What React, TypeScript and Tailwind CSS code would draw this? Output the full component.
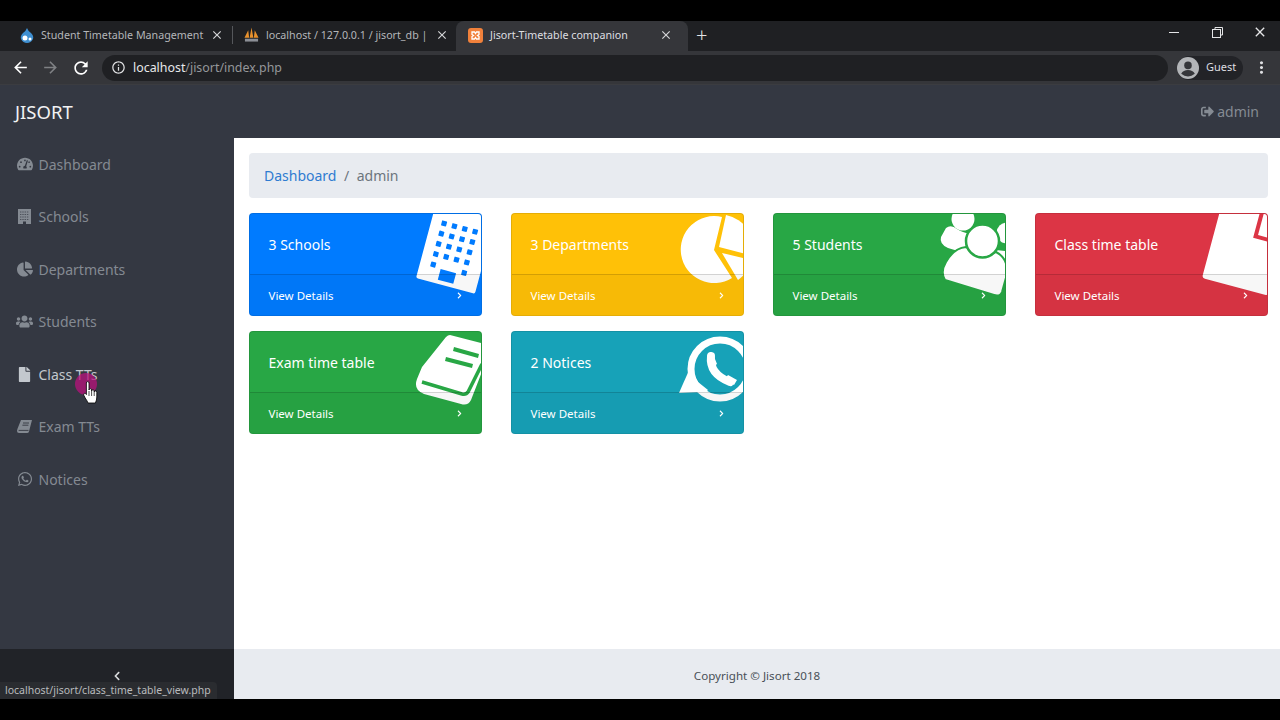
import type { ReactNode } from "react";
import {
  FaChartPie,
  FaChevronLeft,
  FaChevronRight,
  FaFile,
  FaSignOutAlt,
  FaTachometerAlt,
  FaUsers,
  FaWhatsapp,
} from "react-icons/fa";
import {
  MdArrowBack,
  MdArrowForward,
  MdClose,
  MdInfoOutline,
  MdMoreVert,
  MdRefresh,
} from "react-icons/md";

const font = "font-['Noto_Sans','Open_Sans',sans-serif]";

const BuildingArt = ({ color }: { color: string }) => {
  const rows = [-60, -49.4, -38.8, -28.2];
  const cols = [13, 23.7, 34.4, 45.1];
  return (
    <g transform="translate(166 64) rotate(15)">
      <rect x="0" y="-85" width="61" height="85" rx="2" fill="#fff" />
      {rows.map((y) =>
        cols.map((x) => (
          <rect key={`${x}${y}`} x={x - 2.6} y={y - 2.6} width="5.2" height="5.2" rx="0.6" fill={color} />
        ))
      )}
      <rect x="10.6" y="-20" width="5.2" height="5.2" rx="0.6" fill={color} />
      <rect x="42.6" y="-20" width="5.2" height="5.2" rx="0.6" fill={color} />
      <rect x="21.5" y="-15" width="16" height="11" fill={color} />
    </g>
  );
};

const PieArt = () => (
  <g fill="#fff">
    <path d="M202 36 L210 3 A33.5 33.5 0 1 0 220 64 Z" />
    <path d="M207 33 L214 1 A36 36 0 0 1 242 42 Z" />
    <path d="M210 39 L240 46 A36 36 0 0 1 226 66 Z" />
  </g>
);

const UsersArt = ({ color }: { color: string }) => (
  <g fill="#fff">
    <circle cx="189" cy="5" r="11.5" />
    <circle cx="233" cy="19" r="10.5" />
    <path d="M172 14 Q177 10 183 15 Q190 20 198 19 L194 36 Q184 38 174 34 Q165 30 167 23 Z" />
    <path d="M222 36 L240 38 L240 70 L226 52 Z" />
    <path
      d="M171 66 Q166 58 172 48 Q180 34 192 33 Q208 44 222 38 Q234 44 233 60 L228 78 Q226 83 220 81 Z"
      stroke={color}
      strokeWidth="2"
    />
    <circle cx="208.5" cy="27" r="16.5" stroke={color} strokeWidth="2.5" />
  </g>
);

const FileArt = () => (
  <g transform="translate(166 64) rotate(15)">
    <path d="M3 0 H65 Q68 0 68 -3 V-52 H39 V-85 H3 Q0 -85 0 -82 V-3 Q0 0 3 0 Z" fill="#fff" />
    <path d="M43 -85 L72 -56 H43 Z" fill="#fff" />
  </g>
);

const BookArt = ({ color }: { color: string }) => (
  <g>
    <path
      d="M200 3 Q198 3 196 5 L172 35 L167 47 Q163 58 174 62 L211 72 Q218 74 221 68 L242 14 Z"
      fill="#fff"
    />
    <path d="M204 15 L229 22 L228 26 L203 19 Z" fill={color} />
    <path d="M196 25 L223 32 L222 36 L195 29 Z" fill={color} />
    <path d="M172 50 L212 62 Q216 63 218 60 L232 32" fill="none" stroke={color} strokeWidth="3.5" />
  </g>
);

const ChatArt = () => (
  <g>
    <circle cx="208" cy="37" r="29" fill="none" stroke="#fff" strokeWidth="7" />
    <path d="M167 61 L178 36 L192 60 Z" fill="#fff" />
    <path d="M192 62 L186 50 L196 58 Z" fill="#fff" />
    <path d="M199 24 Q197 42 218 50" fill="none" stroke="#fff" strokeWidth="8" strokeLinecap="round" />
    <path d="M196 24 L201 22 L205 32 L201 35 Z" fill="#fff" />
    <path d="M212 48 L216 43 L225 48 L222 53 Z" fill="#fff" />
  </g>
);

// small sidebar glyphs that the icon font of this icon set draws differently
const SchoolGlyph = () => (
  <svg width="13" height="15" viewBox="0 0 13 15">
    <path d="M0 0H13V15H8V12.5H5V15H0Z" fill="currentColor" />
    <path d="M2 3H11M2 5.5H11M2 8H11M2 10.5H11" stroke="#343842" strokeWidth="0.7" strokeDasharray="1.4 0.9" />
  </svg>
);

const BookGlyph = () => (
  <svg width="15" height="14" viewBox="0 0 15 14">
    <path d="M4 0H15L12 11.5Q11.6 13 10 13H2Q0 13 0 11Q0 10 0.6 8.5Z" fill="currentColor" />
    <path d="M1.6 10.4H11.5M6 3H12M5.4 5.2H11.4" stroke="#343842" strokeWidth="0.9" />
  </svg>
);

const HandCursor = () => (
  <svg className="absolute top-[243px] left-[83px]" width="15" height="23" viewBox="0 0 15 23">
    <path
      d="M3.4 2 Q3.4 0.6 4.7 0.6 Q6 0.6 6 2 V9 Q6 7.6 7.3 7.6 Q8.5 7.6 8.6 9 V10 Q8.7 8.7 9.9 8.7 Q11.1 8.7 11.2 10 V11 Q11.3 9.9 12.4 9.9 Q13.8 9.9 13.8 11.5 V16 Q13.8 19 12.4 22 H5 Q4 19.5 2.2 17 L0.8 14.2 Q0.3 12.8 1.4 12.3 Q2.4 12 3.4 13.6 Z"
      fill="#fff"
      stroke="#000"
      strokeWidth="0.8"
    />
    <path d="M6 10V15M8.6 10V15M11.2 11V15" stroke="#000" strokeWidth="0.7" />
  </svg>
);

type StatCardProps = {
  title: string;
  bg: string;
  art: ReactNode;
};

const StatCard = ({ title, bg, art }: StatCardProps) => (
  <div className={`relative h-[103px] overflow-hidden rounded-[4px] border border-black/10 text-white ${bg}`}>
    <svg className="absolute top-0 left-0 h-[103px] w-[233px]" viewBox="0 0 233 103">
      {art}
    </svg>
    <div className="relative flex h-[60px] items-center pl-[18.5px] text-[14px]">{title}</div>
    <div className="relative flex h-[42px] items-center justify-between border-t border-black/15 bg-black/3 pr-[18px] pl-[18.5px] text-[11.5px]">
      <span>View Details</span>
      <FaChevronRight className="text-[7px]" />
    </div>
  </div>
);

const navItems = [
  { label: "Dashboard", icon: <FaTachometerAlt /> },
  { label: "Schools", icon: <SchoolGlyph /> },
  { label: "Departments", icon: <FaChartPie /> },
  { label: "Students", icon: <FaUsers className="text-[17px]" /> },
  { label: "Class TTs", icon: <FaFile className="text-[15px]" />, active: true },
  { label: "Exam TTs", icon: <BookGlyph /> },
  { label: "Notices", icon: <FaWhatsapp className="text-[16px]" /> },
];

type TabProps = {
  title: string;
  icon: ReactNode;
  className: string;
};

const Tab = ({ title, icon, className }: TabProps) => (
  <div className={`flex h-full items-center pb-[2px] ${className}`}>
    <span className="flex w-[15px] shrink-0 justify-center">{icon}</span>
    <span className="ml-[7px] flex-1 text-[10.7px] whitespace-nowrap">{title}</span>
    <MdClose className="ml-[3px] shrink-0 text-[14px] text-[#d5d6d8]" />
  </div>
);

const App = () => {
  return (
    <div className={`flex h-[720px] w-[1280px] flex-col overflow-hidden bg-black ${font}`}>
      <div className="h-[21px] shrink-0" />

      <div className="flex h-[30px] shrink-0 items-center bg-[#1f2023] pl-[5px]">
        <Tab
          title="Student Timetable Management"
          className="w-[227px] pr-[8px] pl-[14px] text-[#b4b6b9]"
          icon={
            <svg width="14" height="15" viewBox="0 0 14 15">
              <path d="M7 0 Q8 3 11 5 Q14 8 13 11 Q11 15 7 15 Q3 15 1 11 Q0 8 3 5 Q6 3 7 0Z" fill="#3f8fd0" />
              <circle cx="5" cy="10" r="2.5" fill="#fff" />
              <circle cx="10" cy="11" r="1.5" fill="#fff" />
            </svg>
          }
        />
        <div className="mb-[2px] h-[18px] w-px bg-[#55575b]" />
        <Tab
          title="localhost / 127.0.0.1 / jisort_db |"
          className="w-[223px] pr-[7px] pl-[11px] text-[#b4b6b9]"
          icon={
            <svg width="16" height="16" viewBox="0 0 16 16">
              <path d="M0.5 11 L4.5 3 L5.5 11 Z M6 11 L8 0 L10 11 Z M10.5 11 L11.5 3 L15.5 11 Z" fill="#e8912d" />
              <rect x="1" y="12" width="14" height="3" fill="#8c8f96" />
            </svg>
          }
        />
        <Tab
          title="Jisort-Timetable companion"
          className="w-[232px] rounded-t-[8px] bg-[#35363a] pr-[15px] pl-[12px] text-[#dedfe1]"
          icon={
            <svg width="15" height="15" viewBox="0 0 15 15">
              <rect width="15" height="15" rx="3" fill="#f1813b" />
              <path d="M4 4 H6.5 L7.5 5.5 L8.5 4 H11 V6.5 L9.5 7.5 L11 8.5 V11 H8.5 L7.5 9.5 L6.5 11 H4 V8.5 L5.5 7.5 L4 6.5 Z" fill="none" stroke="#fff" strokeWidth="1.3" />
            </svg>
          }
        />
        <span className="mb-[2px] ml-[8px] text-[20px] leading-none font-light text-[#e3e4e6]">+</span>
        <div className="mb-[8px] ml-auto flex items-center gap-[29.5px] pr-[12px] text-[#e4e5e7]">
          <div className="mr-[3px] h-px w-[10px] bg-[#e4e5e7]" />
          <svg width="11" height="11" viewBox="0 0 11 11" fill="none" stroke="#e4e5e7">
            <rect x="0.5" y="2.5" width="8" height="8" />
            <path d="M3 2.5 V0.5 H10.5 V8 H8.5" />
          </svg>
          <MdClose className="text-[16px]" />
        </div>
      </div>

      <div className="flex h-[34px] shrink-0 items-center border-b border-[#3b3c40] bg-[#35363a] pl-[11px] text-white">
        <MdArrowBack className="text-[19px]" />
        <MdArrowForward className="ml-[11px] text-[19px] text-[#7f8184]" />
        <MdRefresh className="ml-[11px] text-[20px]" />
        <div className="ml-[11px] flex h-[26px] w-[1066px] items-center rounded-full bg-[#1f2023] pl-[9px] text-[12.4px]">
          <MdInfoOutline className="text-[15px] text-[#e0e1e3]" />
          <span className="ml-[7px] pt-[2px] text-[#e8e9eb]">localhost</span>
          <span className="pt-[2px] text-[#95979a]">/jisort/index.php</span>
        </div>
        <div className="ml-[9px] flex h-[24px] w-[66px] items-center gap-[7px] rounded-full bg-[#222327] text-[11px] text-[#dddee0]">
          <svg width="22" height="22" viewBox="0 0 21 21">
            <circle cx="10.5" cy="10.5" r="10.5" fill="#b3b5b8" />
            <circle cx="10.5" cy="8" r="3.6" fill="#35363a" />
            <path d="M4 16 Q6 12.5 10.5 12.5 Q15 12.5 17 16 Q14 18.5 10.5 18.5 Q7 18.5 4 16Z" fill="#35363a" />
          </svg>
          Guest
        </div>
        <MdMoreVert className="ml-[9px] text-[19px] text-[#dfe0e2]" />
      </div>

      <div className="flex h-[53px] shrink-0 items-center justify-between bg-[#343842] pr-[21px] pl-[15px]">
        <span className="pt-[1px] text-[18.5px] text-[#f1f2f3]">JISORT</span>
        <span className="flex items-center gap-[3px] text-[14px] text-[#858b93]">
          <FaSignOutAlt className="text-[13px]" />
          admin
        </span>
      </div>

      <div className="relative flex min-h-0 flex-1">
        <aside className="flex w-[234px] shrink-0 flex-col bg-[#343842]">
          <nav className="flex-1">
            {navItems.map((item) => (
              <div
                key={item.label}
                className={`flex h-[52.5px] items-center text-[14px] ${item.active ? "text-[#c3c8ce]" : "text-[#848a92]"}`}
              >
                <span className="flex w-[38.5px] shrink-0 justify-center pl-[11px] text-[16px]">{item.icon}</span>
                {item.label}
              </div>
            ))}
          </nav>
          <div className="flex h-[50px] shrink-0 justify-center bg-[#212328] pt-[22px] text-[10px] text-[#d8dadc]">
            <FaChevronLeft />
          </div>
        </aside>

        <main className="flex min-w-0 flex-1 flex-col bg-white">
          <div className="flex-1 pt-[15px] pr-[12px] pl-[15px]">
            <div className="flex h-[45px] items-center rounded-[4px] bg-[#e8ebf0] pl-[15px] text-[14px]">
              <span className="text-[#2f7bd0]">Dashboard</span>
              <span className="mx-[7.5px] text-[#6c757d]">/</span>
              <span className="text-[#6c757d]">admin</span>
            </div>
            <div className="mt-[15px] grid grid-cols-4 gap-x-[29px] gap-y-[15px]">
              <StatCard title="3 Schools" bg="bg-[#007bff]" art={<BuildingArt color="#007bff" />} />
              <StatCard title="3 Departments" bg="bg-[#ffc107]" art={<PieArt />} />
              <StatCard title="5 Students" bg="bg-[#28a745]" art={<UsersArt color="#28a745" />} />
              <StatCard title="Class time table" bg="bg-[#dc3545]" art={<FileArt />} />
              <StatCard title="Exam time table" bg="bg-[#28a745]" art={<BookArt color="#28a745" />} />
              <StatCard title="2 Notices" bg="bg-[#17a2b8]" art={<ChatArt />} />
            </div>
          </div>
          <footer className="flex h-[50px] shrink-0 items-center justify-center bg-[#e8ebf0] pt-[3px] text-[11.6px] text-[#495057]">
            Copyright © Jisort 2018
          </footer>
        </main>

        {/* pointer with click highlight, over the Class TTs row */}
        <div className="absolute top-[235px] left-[75px] h-[22px] w-[22px] rounded-full bg-[#b8127c]/75" />
        <HandCursor />

        {/* link preview bubble */}
        <div className="absolute bottom-0 left-0 flex h-[17px] w-[217px] items-center rounded-tr-[4px] bg-[#2a2c30] pt-px pl-[5px] text-[10.5px] whitespace-nowrap text-[#b9bbbe]">
          localhost/jisort/class_time_table_view.php
        </div>
      </div>

      <div className="h-[21px] shrink-0" />
    </div>
  );
};

export default App;
